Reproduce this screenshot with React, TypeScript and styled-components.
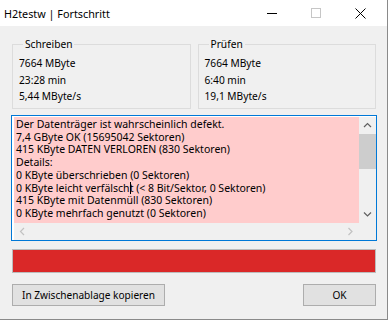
import React from 'react';
import styled, { createGlobalStyle } from 'styled-components';

const Global = createGlobalStyle`
  html, body { margin: 0; padding: 0; background: #ffffff; }
  body { font-family: "Noto Sans", "Open Sans", sans-serif; }
`;

const Window = styled.div`
  width: 387px;
  height: 319px;
  border-right: 1px solid #8a8a8a;
  border-bottom: 1px solid #8a8a8a;
  background: #f0f0f0;
  display: flex;
  flex-direction: column;
  color: #000;
`;

const TitleBar = styled.div`
  height: 26px;
  background: #fff;
  display: flex;
  align-items: center;
  padding: 0 4px 0 4px;
`;

const Title = styled.span`
  flex: 1;
  font-size: 10.8px;
`;

const CaptionButton = styled.div`
  width: 44.5px;
  height: 26px;
  display: flex;
  align-items: center;
  justify-content: center;
`;

const Body = styled.div`
  flex: 1;
  padding: 11px 10px 13px 11px;
  display: flex;
  flex-direction: column;
`;

const Groups = styled.div`
  display: flex;
  gap: 7px;
  padding: 0 1px;
`;

const Group = styled.fieldset`
  margin: 0;
  flex: 1;
  border: 1px solid #dcdcdc;
  padding: 4px 6px 3px 6px;
  min-width: 0;
  font-size: 10.2px;
  line-height: 16.5px;
  & > legend {
    padding: 0 2px;
    margin-left: 4px;
    line-height: 14px;
  }
`;

const Log = styled.div`
  margin-top: 6px;
  height: 126px;
  box-sizing: border-box;
  border: 1px solid #0078d7;
  background: #fff;
  padding: 1px 0 0 2px;
  display: grid;
  grid-template-columns: 1fr 17px;
  grid-template-rows: 1fr 17px;
`;

const LogText = styled.div`
  background: #ffcccc;
  padding: 1.5px 2px 0 2px;
  font-size: 10.5px;
  line-height: 12.7px;
  white-space: nowrap;
  overflow: hidden;
`;

const Caret = styled.span`
  display: inline-block;
  width: 0;
  height: 12px;
  margin-right: -1px;
  border-left: 1px solid #000;
  vertical-align: -2px;
`;

const VScroll = styled.div`
  background: #f0f0f0;
  display: flex;
  flex-direction: column;
`;

const Thumb = styled.div`
  height: 35px;
  background: #cdcdcd;
`;

const ArrowBox = styled.div<{ $end?: boolean }>`
  height: 17px;
  width: 17px;
  display: flex;
  align-items: center;
  justify-content: center;
  ${(p) => (p.$end ? 'margin-top: auto;' : '')}
`;

const HScroll = styled.div`
  background: #f0f0f0;
  display: flex;
  justify-content: space-between;
  align-items: center;
  padding: 0 0 0 0;
`;

const Corner = styled.div`
  background: #f0f0f0;
`;

const Progress = styled.div`
  margin: 8px 1px 0 1px;
  height: 24px;
  box-sizing: border-box;
  border: 1px solid #bcbcbc;
  background: #e6e6e6;
  display: flex;
`;

const ProgressFill = styled.div`
  background: #da2828;
`;

const Buttons = styled.div`
  margin-top: auto;
  padding: 0 1px;
  display: flex;
  justify-content: space-between;
`;

const Button = styled.button<{ $w: number }>`
  width: ${(p) => p.$w}px;
  height: 22px;
  box-sizing: border-box;
  background: #e1e1e1;
  border: 1px solid #adadad;
  font-family: inherit;
  font-size: 10.1px;
  color: #000;
  padding: 0;
`;

const Chevron = ({ dir, color }: { dir: 'up' | 'down' | 'left' | 'right'; color: string }) => {
  const d = {
    up: 'M1 5 L4.5 1.5 L8 5',
    down: 'M1 1.5 L4.5 5 L8 1.5',
    left: 'M5 1 L1.5 4.5 L5 8',
    right: 'M1.5 1 L5 4.5 L1.5 8',
  }[dir];
  const vertical = dir === 'up' || dir === 'down';
  return (
    <svg width={vertical ? 9 : 7} height={vertical ? 7 : 9} viewBox={vertical ? '0 0 9 7' : '0 0 7 9'}>
      <path d={d} fill="none" stroke={color} strokeWidth="1.2" />
    </svg>
  );
};

const lines = [
  'Der Datenträger ist wahrscheinlich defekt.',
  '7,4 GByte OK (15695042 Sektoren)',
  '415 KByte DATEN VERLOREN (830 Sektoren)',
  'Details:',
  '0 KByte überschrieben (0 Sektoren)',
];

export default function App() {
  return (
    <Window>
      <Global />
      <TitleBar>
        <Title>H2testw | Fortschritt</Title>
        <CaptionButton>
          <svg width="10" height="10" viewBox="0 0 10 10">
            <path d="M0 5.5 H10" stroke="#000" strokeWidth="1" />
          </svg>
        </CaptionButton>
        <CaptionButton>
          <svg width="10" height="10" viewBox="0 0 10 10">
            <rect x="0.5" y="0.5" width="9" height="9" fill="none" stroke="#c6c6c6" />
          </svg>
        </CaptionButton>
        <CaptionButton>
          <svg width="11" height="11" viewBox="0 0 11 11">
            <path d="M0.5 0.5 L10.5 10.5 M10.5 0.5 L0.5 10.5" stroke="#000" strokeWidth="1" />
          </svg>
        </CaptionButton>
      </TitleBar>
      <Body>
        <Groups>
          <Group>
            <legend>Schreiben</legend>
            <div>7664 MByte</div>
            <div>23:28 min</div>
            <div>5,44 MByte/s</div>
          </Group>
          <Group>
            <legend>Prüfen</legend>
            <div>7664 MByte</div>
            <div>6:40 min</div>
            <div>19,1 MByte/s</div>
          </Group>
        </Groups>
        <Log>
          <LogText>
            {lines.map((l) => (
              <div key={l}>{l}</div>
            ))}
            <div>
              0 KByte leicht verfälsch<Caret />t (&lt; 8 Bit/Sektor, 0 Sektoren)
            </div>
            <div>415 KByte mit Datenmüll (830 Sektoren)</div>
            <div>0 KByte mehrfach genutzt (0 Sektoren)</div>
          </LogText>
          <VScroll>
            <ArrowBox>
              <Chevron dir="up" color="#606060" />
            </ArrowBox>
            <Thumb />
            <ArrowBox $end>
              <Chevron dir="down" color="#606060" />
            </ArrowBox>
          </VScroll>
          <HScroll>
            <ArrowBox>
              <Chevron dir="left" color="#c2c2c2" />
            </ArrowBox>
            <ArrowBox>
              <Chevron dir="right" color="#c2c2c2" />
            </ArrowBox>
          </HScroll>
          <Corner />
        </Log>
        <Progress>
          <ProgressFill style={{ width: '100%' }} />
        </Progress>
        <Buttons>
          <Button $w={153}>In Zwischenablage kopieren</Button>
          <Button $w={73}>OK</Button>
        </Buttons>
      </Body>
    </Window>
  );
}
